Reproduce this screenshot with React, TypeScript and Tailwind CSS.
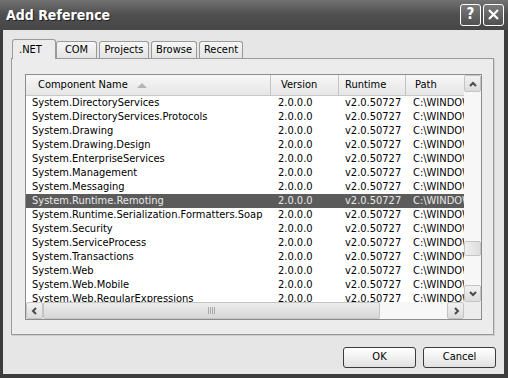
import React from 'react';

const rows = [
  'System.DirectoryServices',
  'System.DirectoryServices.Protocols',
  'System.Drawing',
  'System.Drawing.Design',
  'System.EnterpriseServices',
  'System.Management',
  'System.Messaging',
  'System.Runtime.Remoting',
  'System.Runtime.Serialization.Formatters.Soap',
  'System.Security',
  'System.ServiceProcess',
  'System.Transactions',
  'System.Web',
  'System.Web.Mobile',
  'System.Web.RegularExpressions',
];

const tabs = ['.NET', 'COM', 'Projects', 'Browse', 'Recent'];
const tabWidths = ['w-[44px]', 'w-[41px]', 'w-[50px]', 'w-[46px]', 'w-[44px]'];

function Chevron({ dir }: { dir: 'up' | 'down' | 'left' | 'right' }) {
  const d = {
    up: 'M2 7 L5 4 L8 7',
    down: 'M2 3 L5 6 L8 3',
    left: 'M6 2 L3 5 L6 8',
    right: 'M4 2 L7 5 L4 8',
  }[dir];
  return (
    <svg width="10" height="10" viewBox="0 0 10 10">
      <path d={d} fill="none" stroke="#4a4a4a" strokeWidth={2} />
    </svg>
  );
}

function ScrollBtn({ dir, className }: { dir: 'up' | 'down' | 'left' | 'right'; className: string }) {
  return (
    <div
      className={`${className} flex items-center justify-center rounded-[2px] border border-[#c4c4c4] bg-gradient-to-b from-[#f2f2f2] to-[#dcdcdc]`}
    >
      <Chevron dir={dir} />
    </div>
  );
}

export default function App() {
  return (
    <div
      className="w-[508px] h-[378px] bg-[#3c3c3c] flex flex-col overflow-hidden text-[11px] text-black"
      style={{ fontFamily: '"DejaVu Sans Condensed", "DejaVu Sans", sans-serif' }}
    >
      {/* title bar */}
      <div className="h-[30px] shrink-0 flex items-center pl-[6px] pr-[4px] bg-gradient-to-b from-[#727272] via-[#4e4e4e] to-[#474747]">
        <span className="text-white font-bold text-[14px] flex-1 [text-shadow:1px_1px_0_#222]">
          Add Reference
        </span>
        <div className="flex gap-[2px] mt-[-1px]">
          <div className="w-[21px] h-[22px] rounded-[3px] border border-white bg-gradient-to-b from-[#7a7a7a] to-[#505050] flex items-center justify-center text-white text-[15px] font-bold">
            ?
          </div>
          <div className="w-[21px] h-[22px] rounded-[3px] border border-white bg-gradient-to-b from-[#7a7a7a] to-[#505050] flex items-center justify-center">
            <svg width="13" height="13" viewBox="0 0 13 13">
              <path d="M2 2 L11 11 M11 2 L2 11" stroke="white" strokeWidth={2.2} />
            </svg>
          </div>
        </div>
      </div>

      {/* client */}
      <div className="flex-1 mx-[3px] mb-[4px] mr-[4px] bg-[#e6e6e6] flex flex-col pl-[8px] pr-[10px] pt-[8px]">
        {/* tabs */}
        <div className="flex items-end h-[20px] pl-[1px] gap-[1px]">
          {tabs.map((t, i) =>
            i === 0 ? (
              <div
                key={t}
                className={`${tabWidths[i]} h-[20px] relative z-10 -mb-[1px] border border-b-0 border-[#9a9a9a] rounded-t-[3px] bg-[#ececec] flex items-start pt-[2px] pl-[6px]`}
              >
                {t}
              </div>
            ) : (
              <div
                key={t}
                className={`${tabWidths[i]} h-[17px] border border-b-0 border-[#9a9a9a] rounded-t-[3px] bg-gradient-to-b from-[#f6f6f6] to-[#e4e4e4] flex items-center justify-center ${i === 1 ? '-ml-[1px]' : 'ml-[1px]'}`}
              >
                {t}
              </div>
            )
          )}
        </div>

        {/* panel */}
        <div className="h-[277px] border border-[#9a9a9a] bg-[#ececec] pl-[13px] pr-[11px] pt-[15px] shadow-[1px_1px_0_#cfcfcf]">
          <div className="h-[246px] border border-[#8c8c8c] bg-white flex flex-col">
            <div className="flex flex-1 min-h-0">
              {/* list */}
              <div className="flex-1 min-w-0 overflow-hidden flex flex-col">
                <div className="h-[21px] shrink-0 flex items-center bg-gradient-to-b from-[#f7f7f7] to-[#e6e6e6] border-b border-[#c8c8c8]">
                  <div className="w-[245px] h-full flex items-center pl-[12px] gap-[9px] border-r border-[#c4c4c4]">
                    <span>Component Name</span>
                    <svg width="10" height="6" viewBox="0 0 10 6">
                      <path d="M0 6 L5 1 L10 6 Z" fill="#b4b4b4" />
                    </svg>
                  </div>
                  <div className="w-[68px] h-full flex items-center pl-[10px] border-r border-[#c4c4c4]">Version</div>
                  <div className="w-[67px] h-full flex items-center pl-[6px] border-r border-[#c4c4c4]">Runtime</div>
                  <div className="flex-1 h-full flex items-center pl-[9px]">Path</div>
                </div>
                <div className="flex-1 overflow-hidden">
                  {rows.map((r, i) => {
                    const sel = i === 7;
                    return (
                      <div
                        key={r}
                        className={`h-[14px] flex items-center whitespace-nowrap leading-[14px] ${sel ? 'bg-[#5b5b5b] text-[#e8e8e8]' : ''}`}
                      >
                        <div className="w-[245px] pl-[6px] overflow-hidden">{r}</div>
                        <div className="w-[68px] pl-[7px]">2.0.0.0</div>
                        <div className="w-[67px] pl-[6px]">v2.0.50727</div>
                        <div className="flex-1 pl-[7px] overflow-hidden">C:\WINDOWS</div>
                      </div>
                    );
                  })}
                </div>
              </div>
              {/* vertical scrollbar */}
              <div className="w-[17px] shrink-0 bg-[#f7f7f7] flex flex-col">
                <ScrollBtn dir="up" className="h-[17px] shrink-0" />
                <div className="flex-1 flex flex-col justify-end pb-[29px]">
                  <div className="h-[15px] rounded-[2px] border border-[#c4c4c4] bg-gradient-to-r from-[#f0f0f0] to-[#dedede]" />
                </div>
                <ScrollBtn dir="down" className="h-[17px] shrink-0" />
              </div>
            </div>
            {/* horizontal scrollbar */}
            <div className="h-[17px] shrink-0 flex">
              <div className="flex-1 flex bg-[#f7f7f7]">
                <ScrollBtn dir="left" className="w-[17px] shrink-0" />
                <div className="w-[337px] rounded-[2px] border border-[#c4c4c4] bg-gradient-to-b from-[#ececec] to-[#d8d8d8] flex items-center justify-center">
                  <svg width="8" height="7" viewBox="0 0 8 7">
                    <path d="M0.5 0 V7 M2.5 0 V7 M4.5 0 V7 M6.5 0 V7" stroke="#a8a8a8" strokeWidth={1} />
                  </svg>
                </div>
                <div className="flex-1" />
                <ScrollBtn dir="right" className="w-[17px] shrink-0" />
              </div>
              <div className="w-[17px] bg-[#ececec]" />
            </div>
          </div>
        </div>

        {/* buttons */}
        <div className="flex justify-end gap-[7px] mt-[12px] -mr-[2px]">
          <button className="w-[73px] h-[21px] rounded-[3px] border border-[#3c3c3c] bg-gradient-to-b from-white to-[#e2e2e2] text-[11px]">
            OK
          </button>
          <button className="w-[73px] h-[21px] rounded-[3px] border border-[#3c3c3c] bg-gradient-to-b from-white to-[#e2e2e2] text-[11px]">
            Cancel
          </button>
        </div>
      </div>
    </div>
  );
}
